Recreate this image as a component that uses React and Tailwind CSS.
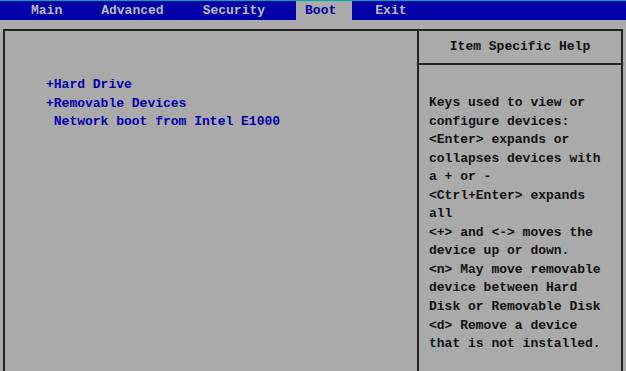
export default function App() {
  const mono = { fontFamily: '"Liberation Mono", "DejaVu Sans Mono", monospace' };
  const tabs = ["Main", "Advanced", "Security", "Boot", "Exit"];
  const help = [
    "Keys used to view or",
    "configure devices:",
    "<Enter> expands or",
    "collapses devices with",
    "a + or -",
    "<Ctrl+Enter> expands",
    "all",
    "<+> and <-> moves the",
    "device up or down.",
    "<n> May move removable",
    "device between Hard",
    "Disk or Removable Disk",
    "<d> Remove a device",
    "that is not installed.",
  ];

  return (
    <div className="w-[626px] h-[371px] overflow-hidden bg-[#aaaaaa] flex flex-col" style={mono}>
      {/* menu bar */}
      <div className="h-[20px] border-t border-[#00a8a8] bg-[#0000aa] flex items-stretch pl-[23px] text-[13px] font-bold leading-[19px] text-[#bcbcbc]">
        {tabs.map((t) => (
          <div
            key={t}
            className={
              t === "Boot"
                ? "pl-[9px] pr-[16px] mr-[15px] bg-[#aaaaaa] text-[#0000aa]"
                : "px-[8px] mr-[23px]"
            }
          >
            {t}
          </div>
        ))}
      </div>

      <div className="flex-1 pt-[9px] pl-[3px] pr-[3px]">
        <div className="h-[400px] border-x-2 border-t-2 border-[#222222] flex">
          {/* boot list */}
          <div className="w-[414px] border-r-2 border-[#222222] pt-[45px] pl-[41px] text-[13px] font-bold leading-[18.6px] text-[#0000aa] whitespace-pre">
            <div>+Hard Drive</div>
            <div>+Removable Devices</div>
            <div> Network boot from Intel E1000</div>
          </div>

          {/* help column */}
          <div className="flex-1 flex flex-col text-[13px] font-bold text-[#111111]">
            <div className="h-[34px] border-b-2 border-[#222222] flex items-center justify-center">
              Item Specific Help
            </div>
            <div className="pt-[29px] pl-[10px] leading-[18.55px] whitespace-pre">
              {help.map((l, i) => (
                <div key={i}>{l}</div>
              ))}
            </div>
          </div>
        </div>
      </div>
    </div>
  );
}
